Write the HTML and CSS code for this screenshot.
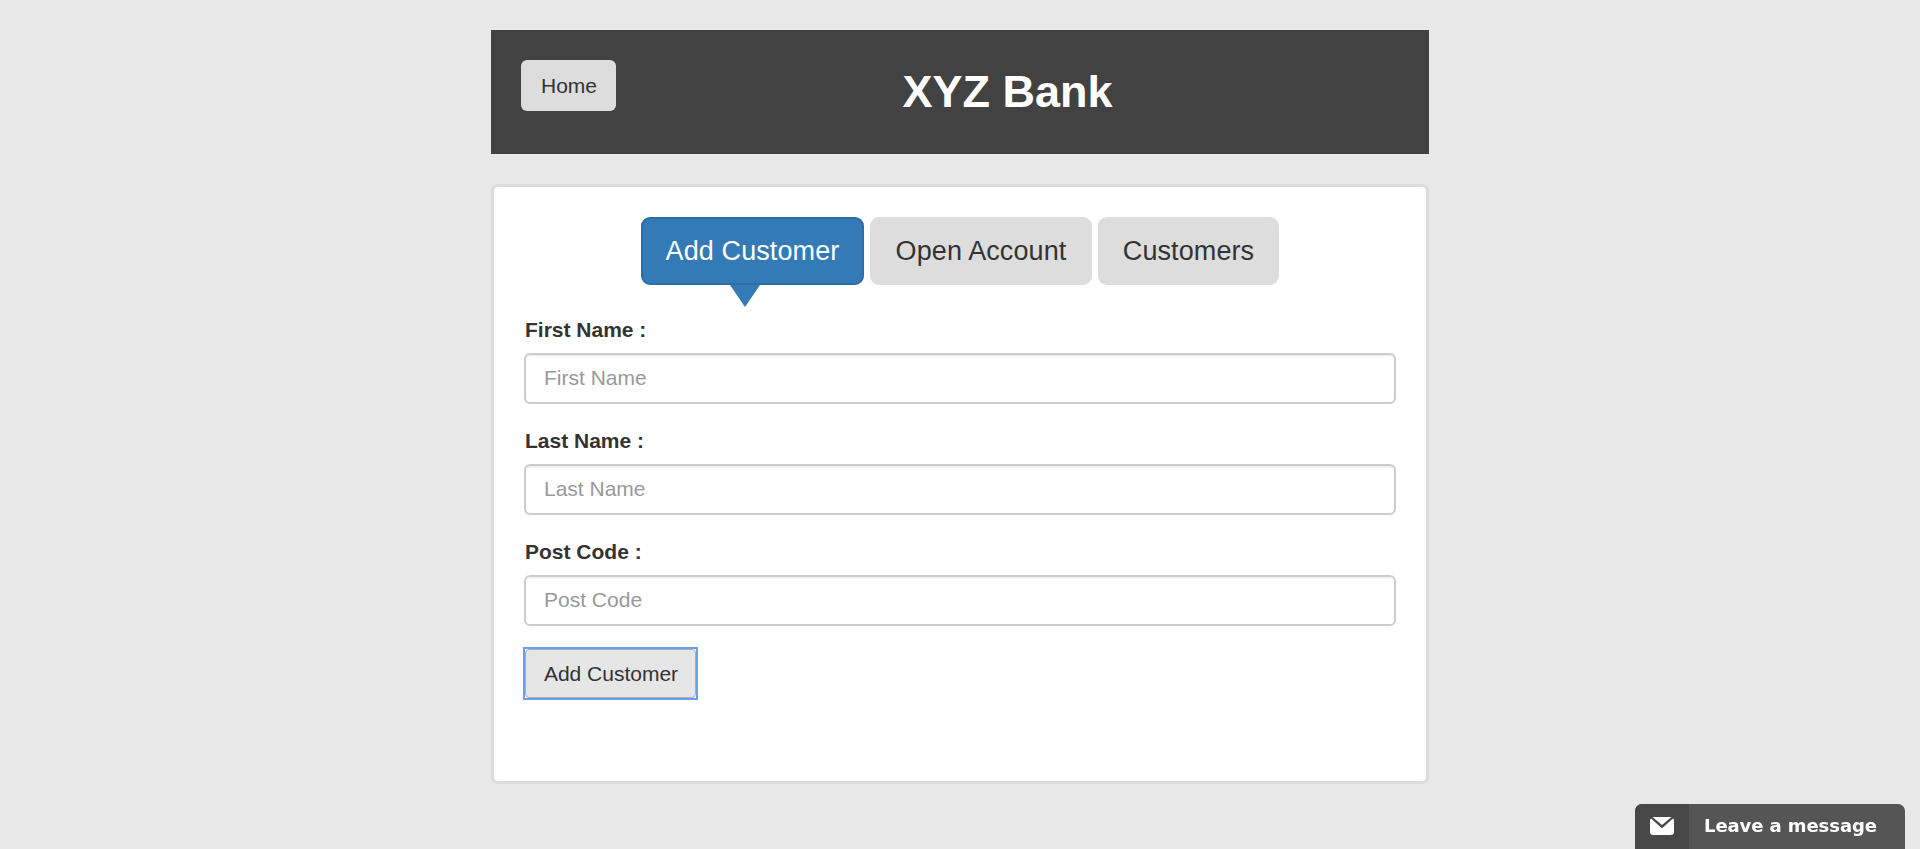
FILE: index.html
```html
<!DOCTYPE html>
<html lang="en">
<head>
<meta charset="utf-8">
<title>XYZ Bank</title>
<link rel="stylesheet" href="styles.css">
</head>
<body>
<main class="page">
  <header class="header">
    <button class="btn home" type="button">Home</button>
    <strong class="title">XYZ Bank</strong>
  </header>
  <section class="card">
    <nav class="tabs">
      <button class="tab tab-active" type="button">Add Customer</button>
      <button class="tab tab-open" type="button">Open Account</button>
      <button class="tab tab-customers" type="button">Customers</button>
    </nav>
    <form class="form">
      <div class="group">
        <label class="label" for="first">First Name :</label>
        <input class="input" id="first" type="text" placeholder="First Name">
      </div>
      <div class="group">
        <label class="label" for="last">Last Name :</label>
        <input class="input" id="last" type="text" placeholder="Last Name">
      </div>
      <div class="group">
        <label class="label" for="post">Post Code :</label>
        <input class="input" id="post" type="text" placeholder="Post Code">
      </div>
      <div class="focus-ring">
        <button class="btn submit" type="button">Add Customer</button>
      </div>
    </form>
  </section>
</main>
<aside class="chat">
  <span class="chat-icon">
    <svg width="24" height="18" viewBox="0 0 24 18" fill="#fff">
      <path d="M2.5 0h19L12 8z"/>
      <path d="M0 3.6Q0 2 1 1.6L12 11.2L23 1.6Q24 2 24 3.6V14.5a3.5 3.5 0 0 1-3.5 3.5h-17A3.5 3.5 0 0 1 0 14.5z"/>
    </svg>
  </span>
  <span class="chat-text">Leave a message</span>
</aside>
</body>
</html>
```
FILE: styles.css
```css
* { box-sizing: border-box; }
body {
  margin: 0;
  height: 849px;
  overflow: hidden;
  background: #e8e8e8;
  color: #333;
  font: 21px/30px "Liberation Sans", Arial, sans-serif;
}
button, input { font: inherit; color: inherit; margin: 0; }
.page { width: 938px; margin: 0 auto; padding-top: 30px; }
.header {
  display: grid;
  grid-template-columns: 95px 1fr;
  align-items: start;
  height: 124px;
  padding: 30px;
  background: #424242;
}
.btn { height: 51px; padding: 0 0 0 1px; border: 0; border-radius: 6px; background: #ddd; }
.title {
  padding-top: 6px;
  color: #fff;
  font-size: 45px;
  line-height: 52px;
  text-align: center;
}
.card {
  height: 600px;
  margin-top: 30px;
  padding: 30px;
  border: 3px solid #dcdcdc;
  border-radius: 7px;
  background: #fff;
}
.tabs { display: flex; justify-content: center; gap: 6px; }
.tab {
  position: relative;
  width: 222px;
  height: 68px;
  padding: 0 0 1px;
  border: 0;
  border-radius: 9px;
  background: #ddd;
  font-size: 27px;
  letter-spacing: .1px;
}
.tab-active { width: 223px; border: 2px solid #2e6da4; background: #337ab7; color: #fff; }
.tab-active::after {
  content: "";
  position: absolute;
  top: 66px;
  left: 87px;
  border: 15px solid transparent;
  border-top: 22px solid #337ab7;
  border-bottom: 0;
}
.tab-customers { width: 181px; }
.form { padding-top: 30px; }
.group { height: 111px; }
.label { display: block; height: 38px; padding-left: 1px; font-weight: bold; }
.input {
  display: block;
  width: 872px;
  height: 51px;
  padding: 0 18px 2px;
  border: 2px solid #ccc;
  border-radius: 6px;
  background: #fff;
  box-shadow: inset 0 1.5px 1.5px rgba(0, 0, 0, .075);
}
.input::placeholder { color: #999; opacity: 1; }
.focus-ring {
  width: 175px;
  height: 53px;
  margin: -1px 0 0 -1px;
  border: 2px solid #6a9ff0;
}
.submit {
  display: block;
  width: 171px;
  height: 49px;
  border: 1px solid #adadad;
  border-radius: 4px;
  background: #e6e6e6;
}
.chat {
  position: fixed;
  right: 15px;
  bottom: 0;
  display: flex;
  width: 270px;
  height: 45px;
  overflow: hidden;
  border-radius: 7px 7px 0 0;
  background: #555;
  color: #fff;
}
.chat-icon { width: 54px; padding: 13px 0 0 15px; background: #484848; line-height: 0; }
.chat-text {
  padding: 7px 0 0 15px;
  font: bold 18px/30px "DejaVu Sans", Verdana, sans-serif;
  letter-spacing: -.08px;
  white-space: nowrap;
}
```
